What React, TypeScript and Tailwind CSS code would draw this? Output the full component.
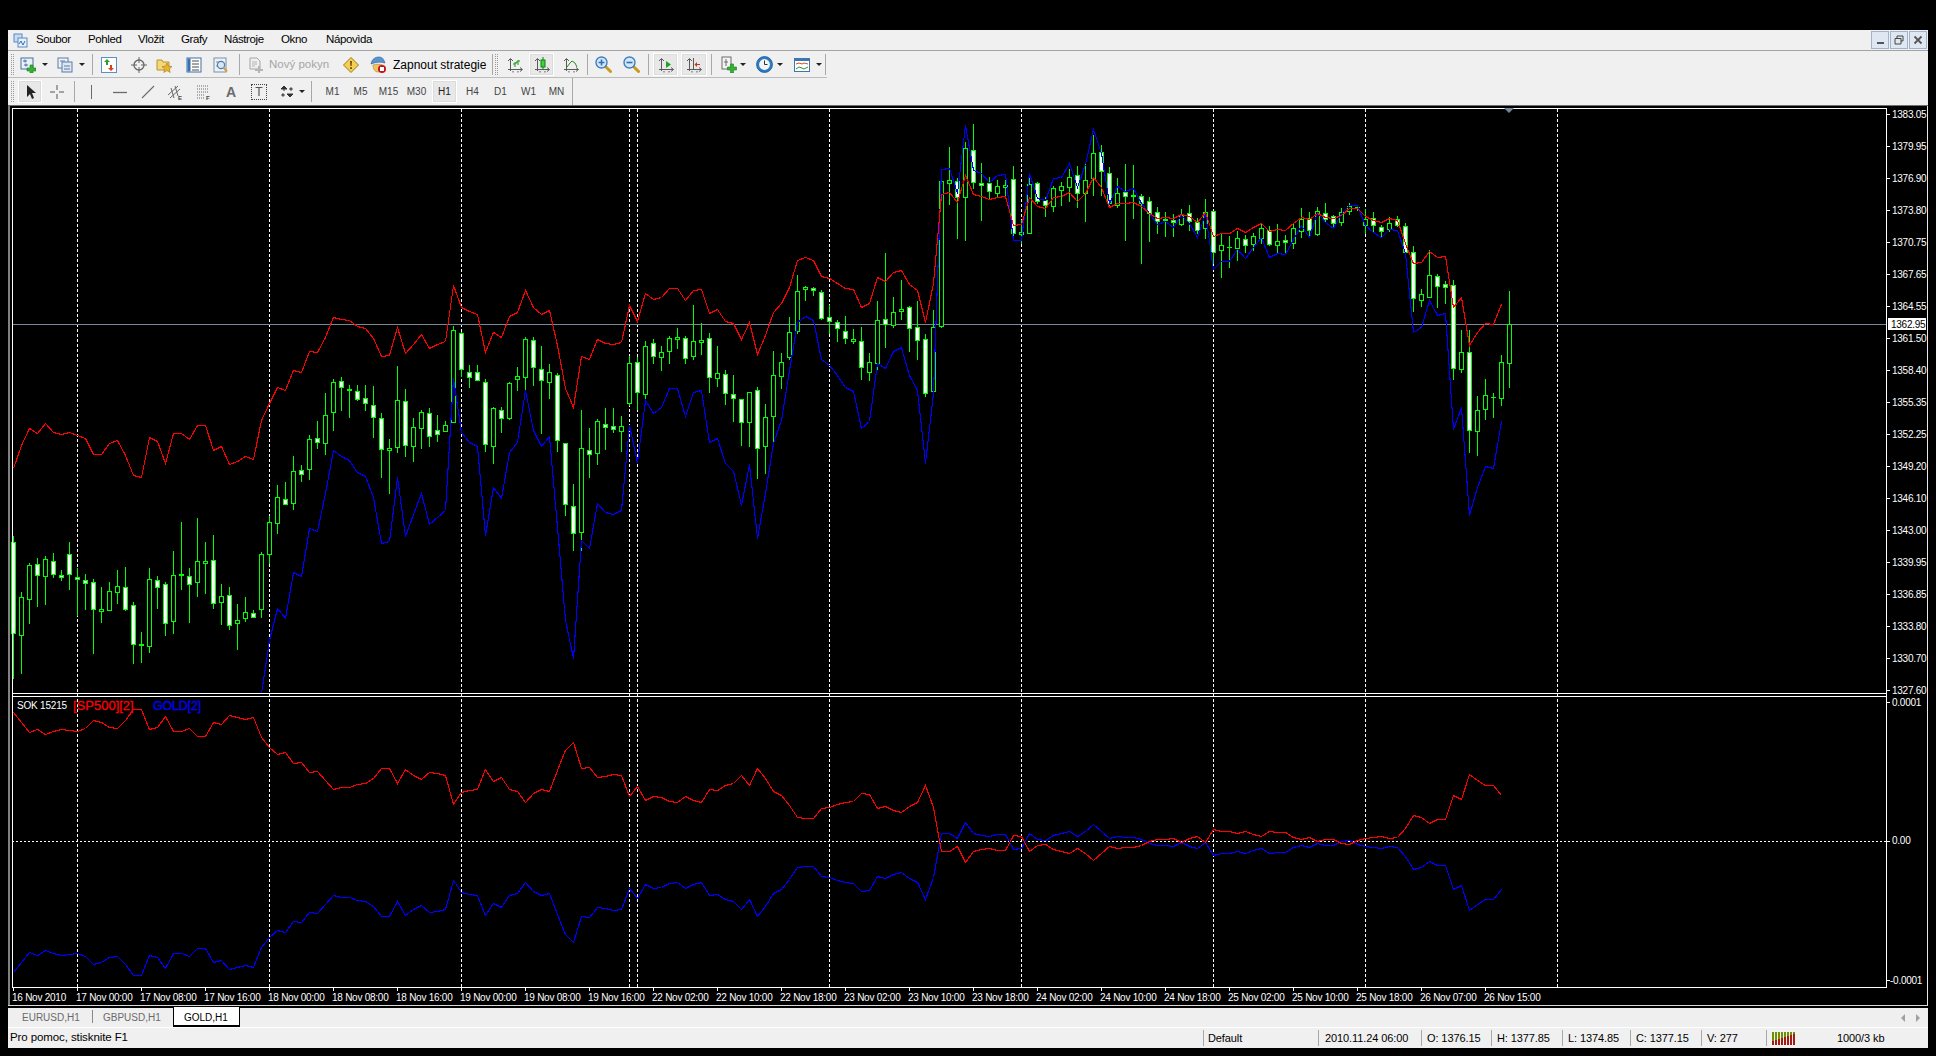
import type { ReactNode } from "react";

// [high, bodyTop, bodyBottom, low, bearish(white)] in page pixels, one per bar, x = 13 + 8 * i
const candles: number[][] = [
  [536,542,633,678,1],[592,597,635,673,0],[563,565,599,623,0],[558,564,575,606,1],[556,559,576,604,0],[553,561,574,577,1],[570,575,577,580,1],[542,554,574,589,1],[568,577,579,615,1],[574,580,583,609,1],
  [579,582,609,653,1],[587,609,611,622,0],[582,591,610,610,0],[570,586,592,603,0],[567,587,609,610,1],[602,605,644,663,1],[632,644,645,662,0],[568,579,646,652,0],[576,580,587,608,1],[582,584,623,635,1],
  [551,575,621,633,0],[522,574,575,589,0],[568,576,584,622,1],[518,561,582,596,0],[542,561,563,593,0],[535,560,603,608,1],[584,596,602,624,0],[587,595,625,629,1],[604,620,623,649,0],[597,612,618,621,0],
  [610,613,617,617,1],[552,554,609,617,0],[516,522,554,563,0],[485,497,523,533,0],[482,499,504,504,1],[456,471,503,509,0],[465,470,474,481,1],[435,439,469,479,0],[421,438,442,448,1],[393,415,443,454,0],
  [379,382,412,430,0],[377,381,387,410,1],[385,389,390,417,0],[385,391,399,400,1],[385,398,403,410,1],[386,405,417,437,1],[413,418,449,477,1],[439,448,450,493,0],[366,400,447,452,0],[389,401,445,456,1],
  [418,427,446,461,0],[410,412,428,448,0],[408,413,436,446,1],[415,430,434,441,1],[421,425,431,431,0],[326,330,422,422,0],[332,333,369,376,1],[365,372,377,387,1],[365,372,380,380,1],[379,382,444,451,1],
  [407,408,446,463,0],[407,410,418,432,1],[382,383,418,419,0],[367,376,379,390,0],[337,339,377,389,0],[337,340,367,385,1],[346,369,380,433,1],[364,372,382,398,0],[373,375,440,451,1],[443,443,504,515,1],
  [484,506,533,550,1],[410,448,532,550,0],[428,450,454,477,1],[419,421,453,464,0],[408,424,427,449,1],[408,426,429,432,1],[416,426,431,451,0],[356,363,403,405,0],[357,362,392,409,1],[341,346,394,398,0],
  [339,343,356,363,1],[346,352,357,370,0],[336,338,351,363,0],[328,337,339,348,0],[336,338,358,363,1],[305,341,356,359,0],[323,340,342,354,0],[333,338,377,392,1],[346,373,378,386,0],[370,374,393,404,1],
  [375,394,398,421,1],[399,399,422,445,1],[392,392,422,446,0],[387,390,448,478,1],[404,417,446,473,0],[351,375,416,445,0],[353,362,376,388,0],[317,332,357,359,0],[275,291,331,333,0],[286,287,289,300,0],
  [287,288,290,295,1],[290,292,318,319,1],[305,317,321,333,1],[320,322,328,341,1],[316,331,338,343,1],[329,339,341,343,0],[327,341,367,379,1],[353,362,372,380,0],[301,320,363,369,0],[253,319,324,347,1],
  [297,312,325,327,0],[280,309,311,319,0],[306,307,328,351,1],[301,327,340,359,1],[334,339,393,396,1],[310,327,391,397,0],[181,181,326,327,0],[147,180,183,204,0],[178,181,197,238,1],[142,148,197,240,0],
  [124,150,182,188,1],[163,183,185,220,1],[177,183,191,199,1],[180,186,193,197,0],[180,185,187,197,0],[166,179,233,237,1],[220,232,234,243,0],[175,184,233,233,0],[182,183,201,203,1],[197,200,205,216,1],
  [186,188,206,211,0],[182,186,190,205,0],[169,177,187,201,0],[166,175,193,207,1],[163,180,193,221,0],[135,153,178,195,0],[145,152,171,195,1],[167,173,203,207,1],[178,193,205,207,0],[164,192,196,240,1],
  [165,195,196,218,0],[194,196,203,263,1],[197,201,213,241,1],[207,212,221,233,1],[212,219,220,236,0],[214,220,222,236,1],[209,215,224,225,0],[205,213,221,230,1],[218,222,230,233,1],[199,212,228,238,0],
  [211,211,252,263,1],[234,245,250,277,0],[236,247,247,267,0],[231,238,248,260,0],[235,239,245,252,1],[233,236,244,250,0],[223,228,238,243,0],[226,230,244,245,1],[224,241,245,253,0],[235,240,242,253,1],
  [223,228,243,248,0],[208,219,231,237,0],[212,218,230,235,1],[207,211,234,235,0],[203,213,219,222,1],[215,216,223,228,1],[208,212,222,225,0],[203,206,211,214,0],[205,207,207,210,0],[209,219,225,233,0],
  [212,218,225,231,1],[225,227,231,236,1],[217,223,229,231,0],[216,219,225,226,1],[223,226,252,253,1],[246,252,298,311,1],[289,294,300,306,0],[250,275,297,297,0],[274,276,286,307,1],[281,284,287,303,1],
  [280,285,368,379,1],[330,352,369,372,0],[330,352,430,452,1],[396,410,431,455,0],[379,395,409,419,0],[393,397,397,417,0],[355,362,398,405,0],[291,324,363,387,0],
];

const redMain = [
  468,445,428,433,423,432,434,432,435,438,454,454,443,440,455,475,477,437,441,463,
  433,433,439,425,425,450,446,464,461,456,459,420,403,387,390,370,372,351,352,337,
  317,319,320,326,328,338,356,355,327,353,344,334,348,344,341,285,307,311,314,352,
  332,337,316,312,290,307,314,310,345,388,407,356,359,339,343,344,342,305,321,293,
  299,297,288,288,300,290,289,313,309,321,323,339,322,354,335,312,303,287,260,257,
  260,276,278,283,288,289,307,303,277,281,272,270,284,290,322,283,194,192,202,175,
  194,196,199,197,196,225,224,197,206,208,197,196,192,201,193,177,187,207,203,203,
  202,206,213,218,217,218,214,216,222,212,236,233,233,228,232,227,223,231,229,230,
  223,217,219,213,217,218,215,208,208,216,220,222,218,220,243,263,262,251,257,256,
  307,297,345,332,323,324,304,
];

// the blue band only comes into view at bar 31
const blueMain = [
  693,640,608,618,572,576,528,531,493,
  450,456,460,472,476,497,543,541,477,536,514,493,524,517,510,378,432,442,446,535,
  487,498,452,442,390,430,446,436,527,620,658,540,548,503,512,514,510,425,462,400,
  413,407,388,388,416,392,390,442,438,463,471,505,464,538,493,443,420,370,322,316,
  320,359,365,375,387,391,428,421,363,368,351,347,375,390,463,393,169,168,193,125,
  170,173,182,175,174,240,240,173,198,200,178,177,163,187,164,129,153,203,186,191,
  188,203,213,224,221,227,215,223,237,213,269,261,261,249,258,247,237,257,253,254,
  239,225,237,212,222,228,213,205,205,225,232,237,229,230,253,332,327,300,315,313,
  429,407,515,487,466,468,421,
];

const redSub = [
  712,722,732,729,734,731,729,730,731,728,720,722,727,728,720,709,709,729,727,716,
  731,731,728,736,736,722,724,715,717,719,717,737,747,754,752,763,762,772,771,780,
  789,787,787,784,783,778,768,768,783,769,775,779,772,773,775,804,792,790,789,769,
  781,777,789,791,802,793,789,791,770,750,742,768,767,777,776,774,775,796,786,800,
  796,797,801,802,796,800,802,789,790,785,783,775,785,768,778,791,795,805,817,818,
  818,808,807,804,802,801,793,794,808,806,810,812,806,802,785,807,851,851,846,862,
  851,849,848,850,850,835,836,851,845,844,849,851,853,848,853,860,853,846,848,847,
  847,845,841,839,839,838,842,838,836,842,829,831,831,833,831,834,836,831,832,832,
  837,839,837,841,839,839,843,844,840,838,837,836,838,837,828,815,817,823,819,819,
  795,799,774,780,785,785,795,
];

const prices = ["1383.05","1379.95","1376.90","1373.80","1370.75","1367.65","1364.55","1361.50","1358.40","1355.35","1352.25","1349.20","1346.10","1343.00","1339.95","1336.85","1333.80","1330.70","1327.60"];
const times = ["16 Nov 2010","17 Nov 00:00","17 Nov 08:00","17 Nov 16:00","18 Nov 00:00","18 Nov 08:00","18 Nov 16:00","19 Nov 00:00","19 Nov 08:00","19 Nov 16:00","22 Nov 02:00","22 Nov 10:00","22 Nov 18:00","23 Nov 02:00","23 Nov 10:00","23 Nov 18:00","24 Nov 02:00","24 Nov 10:00","24 Nov 18:00","25 Nov 02:00","25 Nov 10:00","25 Nov 18:00","26 Nov 07:00","26 Nov 15:00"];
const gridX = [77,269,461,629,637,829,1021,1213,1365,1557];

const points = (ys: number[], first = 0) => ys.map((y, i) => `${13.5 + 8 * (i + first)},${y + 0.5}`).join(" ");

function Chart() {
  return (
    <svg viewBox="8 105 1920 902" className="block w-[1920px] h-[902px]">
      <rect x="8" y="105" width="1920" height="902" fill="#000" />
      <rect x="8" y="105" width="2" height="900" fill="#808080" />
      <rect x="8" y="105" width="1920" height="1" fill="#6e6e6e" />
      <rect x="1927" y="106" width="1" height="900" fill="#e8e8e8" />
      <rect x="8" y="1005" width="1920" height="1" fill="#d8d8d8" />

      {gridX.map((x) => (
        <line key={x} x1={x + 0.5} x2={x + 0.5} y1="109" y2="987" stroke="#fff" strokeDasharray="3 2" />
      ))}
      <line x1="12" x2="1886" y1="841.5" y2="841.5" stroke="#fff" strokeDasharray="2 2" />
      <rect x="12" y="324" width="1874" height="1" fill="#778899" />

      <g shapeRendering="crispEdges">
        {candles.map(([hi, top, bot, lo, white], i) => {
          const x = 13 + 8 * i;
          const h = bot - top + 1;
          return (
            <g key={i}>
              <rect x={x} y={hi} width="1" height={lo - hi + 1} fill="#00ff00" />
              <rect x={x - 2} y={top} width="5" height={h} fill="#00ff00" />
              {h > 2 && <rect x={x - 1} y={top + 1} width="3" height={h - 2} fill={white ? "#fff" : "#000"} />}
            </g>
          );
        })}
      </g>

      <g fill="none" strokeWidth="1.1" shapeRendering="crispEdges">
        <polyline points={points(blueMain, 31)} stroke="#0000ff" />
        <polyline points={points(redMain)} stroke="#ff0000" />
        <polyline points={points(redSub.map((y) => 1684 - y))} stroke="#0000ff" />
        <polyline points={points(redSub)} stroke="#ff0000" />
      </g>

      {/* frame */}
      <g fill="#fff">
        <rect x="12" y="108" width="1875" height="1" />
        <rect x="12" y="108" width="1" height="880" />
        <rect x="1886" y="108" width="1" height="880" />
        <rect x="12" y="693" width="1875" height="1" />
        <rect x="12" y="696" width="1875" height="1" />
        <rect x="12" y="987" width="1875" height="1" />
      </g>
      <path d="M1504 108h10l-5 5z" fill="#778899" />

      <g fill="#fff" fontSize="10" letterSpacing="-0.25">
        {prices.map((p, i) => (
          <g key={p}>
            <rect x="1887" y={114 + 32 * i} width="3" height="1" />
            <text x="1892" y={118 + 32 * i}>{p}</text>
          </g>
        ))}
        <rect x="1887" y="702" width="3" height="1" />
        <text x="1892" y="706">0.0001</text>
        <rect x="1887" y="841" width="3" height="1" />
        <text x="1892" y="844">0.00</text>
        <rect x="1887" y="980" width="3" height="1" />
        <text x="1890" y="984">-0.0001</text>
        {times.map((t, i) => (
          <g key={t}>
            <rect x={13 + 64 * i} y="988" width="1" height="3" />
            <text x={12 + 64 * i} y="1000.5">{t}</text>
          </g>
        ))}
      </g>

      <rect x="1888" y="318" width="38" height="12" fill="#fff" />
      <text x="1891" y="328" fontSize="10" letterSpacing="-0.25" fill="#000">1362.95</text>

      <text x="17" y="709" fontSize="10" fill="#fff" letterSpacing="-0.2">SOK 15215</text>
      <text x="73" y="710" fontSize="13" fill="#ff0000" stroke="#ff0000" strokeWidth=".3">[SP500][2]</text>
      <text x="153" y="710" fontSize="12.5" fill="#0000ff" stroke="#0000ff" strokeWidth=".3" letterSpacing="-0.2">GOLD[2]</text>
    </svg>
  );
}

function Icon({ className = "", children }: { className?: string; children: ReactNode }) {
  return (
    <svg viewBox="0 0 16 16" className={`w-4 h-4 shrink-0 ${className}`}>
      {children}
    </svg>
  );
}

const Axes = () => (
  <path d="M3.5 2v12M1 4l2.5-2.5L6 4M1 12.5h14M13 10.5l2.5 2M13 14.5l2.5-2M6 14v1.5M11 14v1.5" stroke="#5a5a5a" fill="none" />
);

function Plus() {
  return <path d="M10 8h3v3h3v3h-3v2h-3v-2H7v-3h3z" fill="#35b233" stroke="#1d7d1c" strokeWidth=".6" />;
}

function Caret({ className }: { className: string }) {
  return <span className={`w-0 h-0 border-x-[3px] border-x-transparent border-t-[3px] border-t-[#222] shrink-0 ${className}`} />;
}

function Sep({ className }: { className: string }) {
  return <span className={`w-px h-[21px] bg-[#a8a8a8] shrink-0 ${className}`} />;
}

function Grip({ className }: { className: string }) {
  return <span className={`w-[3px] h-[21px] shrink-0 border-x border-dotted border-[#9a9a9a] ${className}`} />;
}

function Pressed({ className, children }: { className: string; children: ReactNode }) {
  return (
    <span className={`h-[23px] flex items-center justify-center bg-[#e8e8e8] border border-white outline outline-[#dcdcdc] -outline-offset-2 shrink-0 ${className}`}>
      {children}
    </span>
  );
}

const Magnifier = ({ minus }: { minus?: boolean }) => (
  <svg viewBox="0 0 17 17" className="w-[17px] h-[17px] shrink-0">
    <path d="M10 10l5.5 5.5" stroke="#c99a1e" strokeWidth="3" strokeLinecap="round" />
    <circle cx="6.5" cy="6.5" r="5.5" fill="#d5e6f6" stroke="#3f7fc0" strokeWidth="1.4" />
    <path d={minus ? "M3.5 6.5h6" : "M3.5 6.5h6M6.5 3.5v6"} stroke="#2f6fb4" strokeWidth="1.6" />
  </svg>
);

function ToolbarOne() {
  return (
    <div className="flex items-center w-[819px] h-[27px] pt-px border-b border-[#bcbcbc] shrink-0">
      <Grip className="ml-[3px]" />
      <Icon className="ml-[6px]">
        <rect x="1" y="1" width="12" height="11" fill="#e8f0f8" stroke="#4a6f9c" />
        <path d="M3 4h4M5 2.5v3M4 8h4M6 6.5v3" stroke="#4a6f9c" fill="none" />
        <Plus />
      </Icon>
      <Caret className="ml-[6px]" />
      <Icon className="ml-[9px]">
        <rect x="1" y="1" width="10" height="10" fill="#eef3f9" stroke="#5a7ca5" />
        <rect x="5" y="5" width="10" height="10" fill="#dde8f3" stroke="#5a7ca5" />
        <path d="M3 4h5M7 9h6M7 12h6" stroke="#5a7ca5" />
      </Icon>
      <Caret className="ml-[6px]" />
      <Sep className="ml-[7px]" />
      <Icon className="ml-[8px]">
        <rect x=".5" y=".5" width="15" height="15" fill="#fff" stroke="#5b8fc6" />
        <path d="M6 2l3 3H7v3H5V5H3z" fill="#27a127" />
        <path d="M10 14l-3-3h2V8h2v3h2z" fill="#d8401f" />
      </Icon>
      <Icon className="ml-[14px]">
        <circle cx="8" cy="8" r="5" fill="none" stroke="#666" strokeWidth="1.3" />
        <path d="M8 0v6M8 10v6M0 8h6M10 8h6" stroke="#666" />
      </Icon>
      <Icon className="ml-[9px]">
        <path d="M1 3h5l1 2h6v8H1z" fill="#f2d878" stroke="#b8932f" />
        <path d="M11 6l1.5 3.2 3.5.4-2.6 2.3.8 3.6-3.2-1.9-3.2 1.9.8-3.6L6 9.6l3.5-.4z" fill="#e8b430" stroke="#a87a16" strokeWidth=".6" />
      </Icon>
      <Icon className="ml-[14px]">
        <rect x="1" y="1" width="14" height="14" fill="#fff" stroke="#3b70ad" />
        <rect x="1.5" y="1.5" width="3" height="13" fill="#3b70ad" />
        <path d="M6 4h7M6 7h7M6 10h7M6 13h7" stroke="#4a4a4a" />
      </Icon>
      <Icon className="ml-[11px]">
        <rect x="1" y="1" width="12" height="14" fill="#eef2f6" stroke="#7f8fa3" />
        <path d="M3 5h7M3 9h3" stroke="#8c8c8c" />
        <circle cx="8" cy="8" r="3.6" fill="#d8e7f5" stroke="#4a7fb6" strokeWidth="1.2" />
        <path d="M10.5 10.5l3.5 4" stroke="#c9a542" strokeWidth="2" />
      </Icon>
      <Sep className="ml-[10px]" />
      <Icon className="ml-[8px]">
        <path d="M2 1h7l3 3v8H2z" fill="#efefef" stroke="#a5a5a5" />
        <path d="M4 5h5M4 7h5M4 9h3" stroke="#b5b5b5" />
        <path d="M10 9h2v3h3v2h-3v2h-2v-2H7v-2h3z" fill="#b5b5b5" />
      </Icon>
      <span className="ml-[5px] w-[60px] text-[11.500px] text-[#a6a6a6] whitespace-nowrap shrink-0">Nový pokyn</span>
      <Icon className="ml-[14px]">
        <path d="M8 .5L15.5 8 8 15.5.5 8z" fill="#f5cf52" stroke="#9a7a1c" />
        <path d="M7.2 4h1.6l-.3 5h-1zM7.2 10.3h1.6v1.6H7.2z" fill="#4a3800" />
      </Icon>
      <svg viewBox="0 0 18 18" className="ml-[10px] w-[18px] h-[18px] shrink-0">
        <path d="M2 8c1-5 4-7 8-7s5 3 6 6c-4-1.5-9-1-14 1z" fill="#5b93cf" stroke="#2f5f97" strokeWidth=".6" />
        <path d="M4 9c3-1 7-1 10 0 0 4-2 7-5 7S4 13 4 9z" fill="#eec45e" stroke="#a8842a" strokeWidth=".6" />
        <circle cx="13" cy="13" r="4" fill="#c8141a" />
        <rect x="11" y="11" width="4" height="4" fill="#fff" />
      </svg>
      <span className="ml-[6px] w-[92px] text-[12px] text-black whitespace-nowrap shrink-0">Zapnout strategie</span>
      <Sep className="ml-[7px]" />
      <Grip className="ml-[2px]" />
      <Icon className="ml-[9px]">
        <Axes />
        <path d="M8 10V5M8 7H6M8 6h2M11 8V3M11 5H9M11 4h2" stroke="#159a15" fill="none" />
      </Icon>
      <Pressed className="ml-[6px] w-[25px]">
        <Icon>
          <Axes />
          <rect x="7" y="3" width="4" height="7" fill="#38d838" stroke="#127a12" />
          <path d="M9 0v3M9 10v2" stroke="#127a12" />
        </Icon>
      </Pressed>
      <Icon className="ml-[9px]">
        <Axes />
        <path d="M4 10l3-4 2-2 3 2 2 4" stroke="#1a941a" fill="none" />
      </Icon>
      <Sep className="ml-[8px]" />
      <span className="ml-[7px] shrink-0 flex"><Magnifier /></span>
      <span className="ml-[11px] shrink-0 flex"><Magnifier minus /></span>
      <Sep className="ml-[8px]" />
      <Pressed className="ml-[4px] w-[25px]">
        <Icon>
          <Axes />
          <path d="M8 4l5 3.5L8 11z" fill="#1ea51e" />
        </Icon>
      </Pressed>
      <Pressed className="ml-[3px] w-[26px]">
        <Icon>
          <Axes />
          <path d="M7.5 1v12" stroke="#5a5a5a" />
          <path d="M14 7h-3V5L8.5 7.500 11 10V8h3z" fill="#c6371a" />
        </Icon>
      </Pressed>
      <Sep className="ml-[4px]" />
      <svg viewBox="0 0 17 17" className="ml-[8px] w-[17px] h-[17px] shrink-0">
        <rect x="2" y="1" width="9" height="12" fill="#f4f4f4" stroke="#6b6b6b" />
        <path d="M6 3v7M4 6h4" stroke="#6b6b6b" />
        <path d="M10.500 8h3v3h3v3h-3v3h-3v-3h-3v-3h3z" fill="#35b233" stroke="#1d7d1c" strokeWidth=".6" />
      </svg>
      <Caret className="ml-[3px]" />
      <svg viewBox="0 0 17 17" className="ml-[10px] w-[17px] h-[17px] shrink-0">
        <circle cx="8.5" cy="8.5" r="8" fill="#2b7cc6" stroke="#164e86" strokeWidth=".7" />
        <circle cx="8.500" cy="8.500" r="5.400" fill="#f4f4f4" />
        <path d="M8.500 4.500v4h3" stroke="#333" fill="none" />
      </svg>
      <Caret className="ml-[4px]" />
      <Icon className="ml-[11px]">
        <rect x=".5" y="1.500" width="15" height="13" fill="#fff" stroke="#3f75b0" />
        <rect x="1" y="2" width="14" height="2" fill="#3f75b0" />
        <path d="M2 7l3-1 3 1 2-1 4 1" stroke="#d24a2a" fill="none" />
        <path d="M2 12l3-2 3 1 2 1 4-2" stroke="#2d9a2d" fill="none" />
      </Icon>
      <Caret className="ml-[6px]" />
      <Sep className="ml-[3px]" />
    </div>
  );
}

function ToolbarTwo() {
  return (
    <div className="flex items-center h-[27px] shrink-0">
      <Grip className="ml-[3px]" />
      <Pressed className="ml-[4px] w-[24px]">
        <svg viewBox="0 0 16 16" className="w-4 h-4">
          <path d="M5 1v12l3-3 2 5 2-1-2-5h4z" fill="#222" />
        </svg>
      </Pressed>
      <Icon className="ml-[7px]">
        <path d="M8 1v5M8 10v5M1 8h5M10 8h5" stroke="#555" />
      </Icon>
      <Sep className="ml-[9px]" />
      <Icon className="ml-[8px]">
        <path d="M8.500 1v14" stroke="#6a6a6a" />
      </Icon>
      <Icon className="ml-[13px]">
        <path d="M1 8.500h14" stroke="#6a6a6a" strokeWidth="1.3" />
      </Icon>
      <Icon className="ml-[12px]">
        <path d="M2 14L14 2" stroke="#6a6a6a" strokeWidth="1.1" />
      </Icon>
      <Icon className="ml-[11px]">
        <path d="M1 11L11 2M3 14L13 5M4 4l3 10M8 2l3 10" stroke="#6a6a6a" fill="none" />
        <text x="11" y="15.500" fontSize="6" fontWeight="700" fill="#444">E</text>
      </Icon>
      <Icon className="ml-[13px]">
        <path d="M1 2h12M1 5h12M1 8h12M1 11h8M1 14h8" stroke="#6a6a6a" strokeDasharray="1 1" />
        <text x="10" y="15.500" fontSize="6" fontWeight="700" fill="#444">F</text>
      </Icon>
      <span className="ml-[13px] w-[12px] text-center text-[14px] leading-none font-bold text-[#6a6a6a] shrink-0">A</span>
      <span className="ml-[14px] w-4 h-4 flex items-center justify-center border border-dotted border-[#444] text-[12px] leading-none text-[#555] shrink-0">T</span>
      <Icon className="ml-[12px]">
        <path d="M2 5l3-3 3 3zM5 5v2" fill="#333" stroke="#333" />
        <path d="M8 10l3 3 3-3z" fill="#333" stroke="#333" />
        <path d="M4 9l2 2-2 2-2-2z M12 3l2 2-2 2-2-2z" fill="#555" />
      </Icon>
      <Caret className="ml-[4px]" />
      <Sep className="ml-[6px]" />
      <div className="ml-[8px] flex items-center gap-[3px] text-[10px] text-[#444]">
        <span className="w-[25px] text-center">M1</span>
        <span className="w-[25px] text-center">M5</span>
        <span className="w-[25px] text-center">M15</span>
        <span className="w-[25px] text-center">M30</span>
        <span className="w-[25px] h-[23px] leading-[21px] text-center bg-[#e8e8e8] border border-white outline outline-[#dcdcdc] -outline-offset-2 text-[#222]">H1</span>
        <span className="w-[25px] text-center">H4</span>
        <span className="w-[25px] text-center">D1</span>
        <span className="w-[25px] text-center">W1</span>
        <span className="w-[25px] text-center">MN</span>
      </div>
      <Sep className="ml-[3px] h-[27px]" />
    </div>
  );
}

function WinBtn({ children }: { children: ReactNode }) {
  return <span className="w-[18px] h-[18px] flex items-center justify-center bg-[#dfe8f2] border border-[#9fb4c8]">{children}</span>;
}

function MenuBar() {
  return (
    <div className="flex items-center h-[21px] border-b border-[#a4a4a4] shrink-0 text-[11.500px] tracking-[-0.4px] text-black">
      <svg viewBox="0 0 15 15" className="ml-[5px] w-[15px] h-[15px] shrink-0">
        <rect x="1" y="1" width="8" height="8" fill="#c8dcf2" stroke="#5a8ac2" />
        <rect x="5" y="5" width="9" height="9" fill="#e8f1fb" stroke="#5a8ac2" />
        <path d="M6 11l2-3 2 4 2-4" stroke="#2f6fb4" fill="none" />
      </svg>
      <span className="ml-[8px] w-[52px]">Soubor</span>
      <span className="w-[50px]">Pohled</span>
      <span className="w-[43px]">Vložit</span>
      <span className="w-[43px]">Grafy</span>
      <span className="w-[57px]">Nástroje</span>
      <span className="w-[45px]">Okno</span>
      <span>Nápovìda</span>
      <div className="ml-auto flex gap-px pr-px">
        <WinBtn><span className="block w-[7px] h-[2px] bg-[#555] mt-[5px]" /></WinBtn>
        <WinBtn>
          <svg viewBox="0 0 10 10" className="w-[10px] h-[10px]">
            <path d="M3 3V1h6v5H7M1 3.500h6v5.500H1z" stroke="#444" fill="none" />
          </svg>
        </WinBtn>
        <WinBtn>
          <svg viewBox="0 0 10 10" className="w-[10px] h-[10px]">
            <path d="M1.500 1.500l7 7M8.500 1.500l-7 7" stroke="#555" strokeWidth="1.800" />
          </svg>
        </WinBtn>
      </div>
    </div>
  );
}

function TabBar() {
  return (
    <div className="flex items-stretch h-[20px] shrink-0 bg-[#efefef] text-[10px] border-t border-black">
      <span className="ml-[14px] w-[70px] pt-[2px] text-[#6a6a6a]">EURUSD,H1</span>
      <span className="w-px h-[13px] mt-[2px] bg-[#888]" />
      <span className="ml-[10px] w-[70px] pt-[2px] text-[#6a6a6a]">GBPUSD,H1</span>
      <span className="w-[67px] -mt-px bg-white border-x border-b-2 border-black pl-[10px] pt-[3px] text-black">GOLD,H1</span>
      <div className="ml-auto flex items-center gap-[11px] pr-[8px]">
        <span className="w-0 h-0 border-y-[4px] border-y-transparent border-r-[4px] border-r-[#a0a0a0]" />
        <span className="w-0 h-0 border-y-[4px] border-y-transparent border-l-[4px] border-l-[#a0a0a0]" />
      </div>
    </div>
  );
}

function Cell({ className, children }: { className: string; children: ReactNode }) {
  return <span className={`h-[16px] border-l border-[#a8a8a8] leading-[16px] whitespace-nowrap ${className}`}>{children}</span>;
}

function StatusBar() {
  return (
    <div className="flex items-center h-[21px] shrink-0 bg-[#f0f0f0] border-t border-white text-[11px] tracking-[-0.1px] text-black">
      <span className="w-[1195px] pl-[2px] text-[11.500px]">Pro pomoc, stisknite F1</span>
      <Cell className="w-[115px] pl-[4px]">Default</Cell>
      <Cell className="w-[103px] pl-[6px]">2010.11.24 06:00</Cell>
      <Cell className="w-[70px] pl-[5px]">O: 1376.15</Cell>
      <Cell className="w-[71px] pl-[5px]">H: 1377.85</Cell>
      <Cell className="w-[68px] pl-[5px]">L: 1374.85</Cell>
      <Cell className="w-[71px] pl-[5px]">C: 1377.15</Cell>
      <Cell className="w-[65px] pl-[5px]">V: 277</Cell>
      <span className="h-[16px] flex-1 border-l border-[#a8a8a8] flex items-center">
        <svg viewBox="0 0 24 13" className="ml-[5px] w-[24px] h-[13px]">
          {[0, 1, 2, 3, 4, 5, 6, 7].map((b) => (
            <g key={b}>
              <rect x={b * 3} y="0" width="2" height={9 - b} fill="#6f8e00" />
              <rect x={b * 3} y={9 - b} width="2" height={4 + b} fill="#a51a12" />
            </g>
          ))}
        </svg>
        <span className="ml-[41px]">1000/3 kb</span>
      </span>
    </div>
  );
}

export default function App() {
  return (
    <div className="w-[1936px] h-[1056px] bg-black pt-[30px] px-2 pb-2 font-['Liberation_Sans',sans-serif] overflow-hidden">
      <div className="flex flex-col h-full bg-[#f0f0f0]">
        <MenuBar />
        <ToolbarOne />
        <ToolbarTwo />
        <div className="flex-1 min-h-0">
          <Chart />
        </div>
        <TabBar />
        <StatusBar />
      </div>
    </div>
  );
}
